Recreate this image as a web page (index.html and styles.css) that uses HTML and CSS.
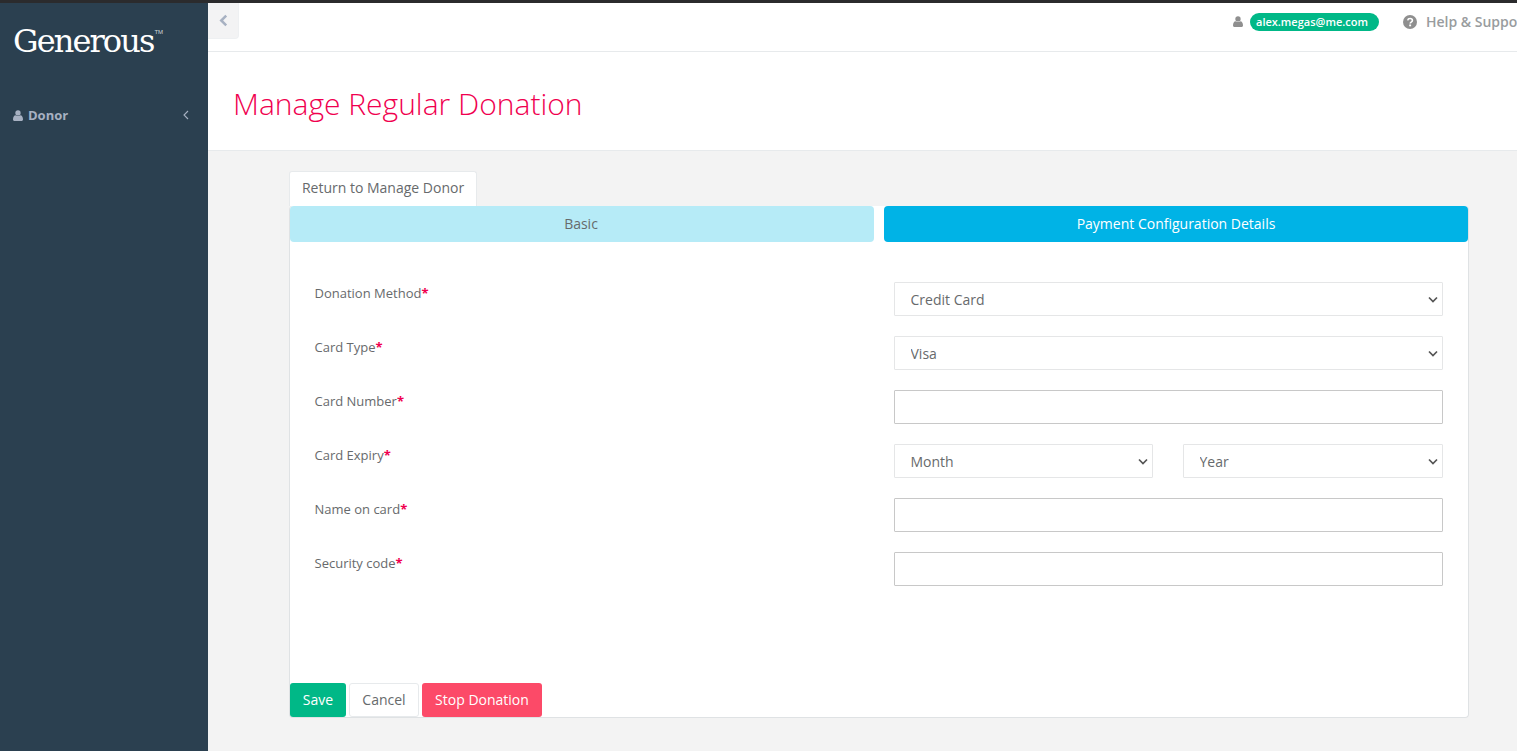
FILE: index.html
```html
<!DOCTYPE html>
<html lang="en">
<head>
<meta charset="utf-8">
<title>Manage Regular Donation</title>
<link rel="stylesheet" href="styles.css">
</head>
<body>
<div class="topline"></div>
<div class="app">
  <aside class="sidebar">
    <div class="logo">Generous<sup class="tm">TM</sup></div>
    <nav class="side-item">
      <span class="side-label">
        <svg class="ico-user" viewBox="0 0 12 13" width="10" height="11"><circle cx="6" cy="3.4" r="3.2"/><path d="M0 11.2C0 8 1.4 6.3 3 6.1c.8.6 1.9 1 3 1s2.2-.4 3-1c1.600.2 3 1.900 3 5.100C12 12.300 11.200 13 10.200 13H1.800C.8 13 0 12.300 0 11.200z"/></svg>
        Donor
      </span>
      <svg class="side-chev" viewBox="0 0 6 10" width="6" height="10"><path d="M5 1 1 5l4 4" fill="none" stroke="currentColor" stroke-width="1.100"/></svg>
    </nav>
  </aside>
  <main class="main">
    <header class="topbar">
      <button class="collapse" type="button" aria-label="Collapse">
        <svg viewBox="0 0 10 14" width="9" height="13"><path d="M8 1.500 2.500 7 8 12.500" fill="none" stroke="currentColor" stroke-width="2.800"/></svg>
      </button>
      <div class="top-right">
        <svg class="ico-user grey" viewBox="0 0 12 13" width="10" height="11"><circle cx="6" cy="3.400" r="3.200"/><path d="M0 11.200C0 8 1.400 6.300 3 6.100c.8.600 1.900 1 3 1s2.200-.4 3-1c1.600.2 3 1.900 3 5.100C12 12.300 11.200 13 10.200 13H1.800C.8 13 0 12.300 0 11.200z"/></svg>
        <span class="pill">alex.megas@me.com</span>
        <span class="help">
          <svg class="ico-help" viewBox="0 0 14 14" width="14" height="14"><circle cx="7" cy="7" r="7" fill="#8f8f8f"/><path d="M4.700 5.300C4.900 4.100 5.900 3.500 7.100 3.500c1.300 0 2.300.8 2.300 1.900 0 1.800-2.200 1.700-2.200 3.200" fill="none" stroke="#fff" stroke-width="1.600"/><rect x="6.200" y="9.500" width="1.900" height="1.800" fill="#fff"/></svg>
          Help &amp; Support
        </span>
      </div>
    </header>
    <section class="titlebar"><h1>Manage Regular Donation</h1></section>
    <section class="content">
      <a class="return-tab" href="#">Return to Manage Donor</a>
      <div class="panel">
        <div class="steps">
          <div class="step step-light">Basic</div>
          <div class="step step-active">Payment Configuration Details</div>
        </div>
        <form class="form">
          <div class="row">
            <label class="lab">Donation Method<span class="req">*</span></label>
            <div class="ctl"><select class="sel"><option>Credit Card</option></select></div>
          </div>
          <div class="row">
            <label class="lab">Card Type<span class="req">*</span></label>
            <div class="ctl"><select class="sel"><option>Visa</option></select></div>
          </div>
          <div class="row">
            <label class="lab">Card Number<span class="req">*</span></label>
            <div class="ctl"><input class="inp" type="text"></div>
          </div>
          <div class="row">
            <label class="lab">Card Expiry<span class="req">*</span></label>
            <div class="ctl split">
              <select class="sel"><option>Month</option></select>
              <select class="sel"><option>Year</option></select>
            </div>
          </div>
          <div class="row">
            <label class="lab">Name on card<span class="req">*</span></label>
            <div class="ctl"><input class="inp" type="text"></div>
          </div>
          <div class="row">
            <label class="lab">Security code<span class="req">*</span></label>
            <div class="ctl"><input class="inp" type="text"></div>
          </div>
        </form>
        <div class="actions">
          <button class="btn btn-save" type="button">Save</button>
          <button class="btn btn-cancel" type="button">Cancel</button>
          <button class="btn btn-stop" type="button">Stop Donation</button>
        </div>
      </div>
    </section>
  </main>
</div>
</body>
</html>
```

FILE: styles.css
```css
* { box-sizing: border-box; }
html, body { height: 100%; }
body {
  margin: 0;
  overflow: hidden;
  font-family: "Open Sans", "Liberation Sans", sans-serif;
  font-size: 14px;
  color: #676a6c;
  background: #f3f3f3;
}
.topline { height: 3px; background: #2b2b2d; }
.app { display: flex; height: 748px; }

.sidebar { width: 208px; flex: none; background: #2b4050; }
.logo {
  padding: 19px 0 0 13px;
  height: 101px;
  font-family: "DejaVu Serif", serif;
  font-size: 32px;
  line-height: 38px;
  letter-spacing: -1.9px;
  color: #fff;
  display: flex;
  align-items: flex-start;
}
.tm { font-family: "Liberation Sans", sans-serif; font-size: 6px; line-height: 8px; letter-spacing: 0; margin-top: 6px; margin-left: 1px; color: #cfd6da; }
.side-item {
  display: flex;
  justify-content: space-between;
  align-items: center;
  height: 22px;
  padding: 0 19px 0 13px;
  color: #a7b1c2;
}
.side-label { display: flex; align-items: center; gap: 5px; font-size: 13px; font-weight: 700; }
.ico-user { fill: #a7b1c2; flex: none; }
.ico-user.grey { fill: #8f8f8f; }
.ico-help { flex: none; }

.main { flex: 1; min-width: 0; display: flex; flex-direction: column; }
.topbar {
  height: 49px;
  flex: none;
  background: #fff;
  border-bottom: 1px solid #e7eaec;
  display: flex;
  justify-content: space-between;
  align-items: flex-start;
}
.collapse {
  width: 31px;
  height: 36px;
  padding: 0;
  border: 1px solid #eef0f2;
  border-top: 0;
  border-left: 0;
  border-radius: 0 0 4px 0;
  background: #f3f3f4;
  color: #a7b1c2;
  display: flex;
  align-items: center;
  justify-content: center;
}
.top-right {
  display: flex;
  align-items: center;
  white-space: nowrap;
  height: 19px;
  margin-top: 9px;
  flex: none;
  width: 284px;
  overflow: hidden;
}
.pill {
  margin-left: 7px;
  height: 18px;
  line-height: 18px;
  padding: 0 11px 0 6px;
  border-radius: 9px;
  background: #00b887;
  color: #fff;
  font-size: 11px;
  font-weight: 600;
  flex: none;
}
.help {
  margin-left: 24px;
  display: flex;
  align-items: center;
  gap: 9px;
  color: #999c9e;
  font-size: 14px;
  font-weight: 600;
  flex: none;
}

.titlebar {
  height: 99px;
  flex: none;
  background: #fff;
  border-bottom: 1px solid #e7eaec;
  padding: 31px 0 0 25px;
}
.titlebar h1 {
  margin: 0;
  font-size: 30px;
  line-height: 41px;
  font-weight: 300;
  color: #f0004f;
}

.content { flex: 1; padding: 20px 48px 0 81px; }
.return-tab {
  display: block;
  width: 188px;
  height: 35px;
  line-height: 31px;
  text-align: center;
  background: #fff;
  border: 1px solid #e7eaec;
  border-bottom: 0;
  border-radius: 3px 3px 0 0;
  color: #676a6c;
  text-decoration: none;
}
.panel {
  height: 512px;
  background: #fff;
  border: 1px solid #dfe2e4;
  border-top: 0;
  border-radius: 4px;
  display: flex;
  flex-direction: column;
}
.steps { display: grid; grid-template-columns: 1fr 1fr; gap: 10px; height: 36px; flex: none; }
.step { display: flex; align-items: center; justify-content: center; border-radius: 4px; padding-bottom: 2px; }
.step-light { background: #b6ebf7; color: #676a6c; padding-right: 2px; }
.step-active { background: #00b3e6; color: #fff; font-weight: 500; }

.form { flex: 1; padding: 40px 25px 0 24.5px; display: flex; flex-direction: column; gap: 20px; }
.row { display: flex; height: 34px; }
.lab { width: 579.5px; flex: none; font-size: 13px; line-height: 22px; }
.req { color: #f0004f; font-weight: 700; }
.ctl { flex: 1; min-width: 0; display: flex; }
.ctl.split { display: grid; grid-template-columns: 259px 260px; gap: 30px; }
.sel, .inp {
  flex: 1;
  min-width: 0;
  width: 100%;
  height: 34px;
  font: inherit;
  color: #676a6c;
  background-color: #fff;
  border-radius: 1px;
}
.sel {
  appearance: none;
  border: 1px solid #e5e6e7;
  padding: 0 24px 0 15.5px;
  background-image: url("data:image/svg+xml,%3Csvg xmlns='http://www.w3.org/2000/svg' width='10' height='7' viewBox='0 0 10 7'%3E%3Cpath d='M1 1.500l4 4 4-4' fill='none' stroke='%23555' stroke-width='1.700'/%3E%3C/svg%3E");
  background-repeat: no-repeat;
  background-position: right 4px center;
}
.inp { border: 1px solid #c8c8c8; }

.actions { display: flex; gap: 3px; flex: none; }
.btn {
  height: 34px;
  padding: 0 0 2px;
  font: inherit;
  border-radius: 3px;
  border: 1px solid transparent;
}
.btn-save { width: 56px; background: #00b887; color: #fff; font-weight: 500; }
.btn-cancel { width: 70px; background: #fff; border-color: #e7eaec; color: #676a6c; }
.btn-stop { width: 120px; background: #fc4a68; color: #fff; font-weight: 500; }
```
